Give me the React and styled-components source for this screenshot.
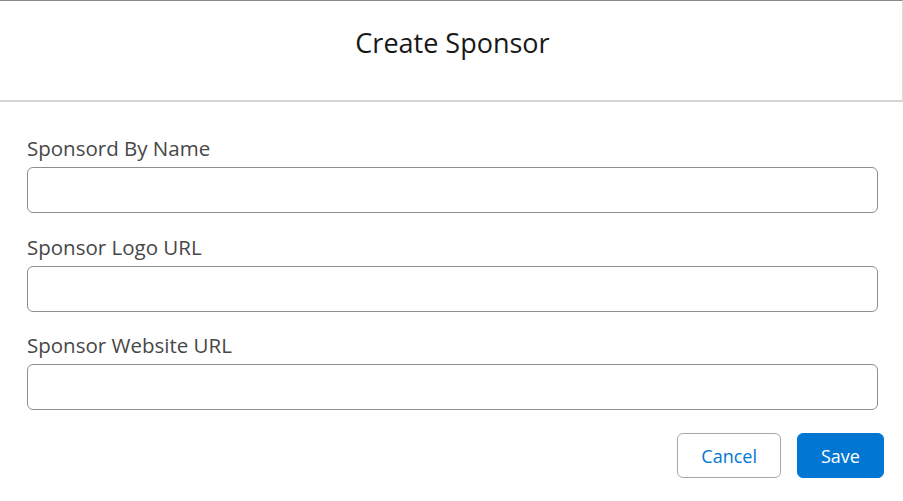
import React from "react";
import styled, { createGlobalStyle } from "styled-components";

const Global = createGlobalStyle`
  html, body { margin: 0; padding: 0; background: #fff; }
  body { font-family: "Open Sans", "Noto Sans", sans-serif; }
  * { box-sizing: border-box; }
`;

const Modal = styled.div`
  width: 903px;
  height: 501px;
  background: #fff;
  display: flex;
  flex-direction: column;
`;

const Header = styled.header`
  height: 102px;
  border-top: 1px solid #8a8a8a;
  border-right: 1px solid #dcdcdc;
  border-bottom: 2px solid #d6d6d6;
  display: flex;
  align-items: flex-start;
  justify-content: center;
  padding-top: 24px;
`;

const Title = styled.h2`
  margin: 0;
  font-size: 27px;
  font-weight: 400;
  line-height: 36px;
  color: #181818;
  padding-left: 3px;
`;

const Body = styled.div`
  padding: 33px 25px 0 27px;
  display: flex;
  flex-direction: column;
  gap: 20.5px;
`;

const Field = styled.div`
  display: flex;
  flex-direction: column;
  gap: 6px;
`;

const Label = styled.label`
  font-size: 20.5px;
  line-height: 26px;
  color: #474747;
`;

const Input = styled.input`
  height: 46px;
  width: 100%;
  border: 1px solid #8f8f8f;
  border-radius: 6px;
  background: #fff;
  font: inherit;
  padding: 0 12px;
  outline: none;
`;

const Footer = styled.div`
  display: flex;
  justify-content: flex-end;
  gap: 16px;
  padding: 23px 19px 0 0;
`;

const Button = styled.button`
  height: 45px;
  padding: 0 23px;
  min-width: ${(p) => (p.$primary ? "87px" : "103px")};
  border-radius: 6px;
  font-family: inherit;
  font-size: 18px;
  cursor: pointer;
  border: 1px solid ${(p) => (p.$primary ? "#0176d3" : "#a8a8a8")};
  background: ${(p) => (p.$primary ? "#0176d3" : "#fff")};
  color: ${(p) => (p.$primary ? "#fff" : "#0176d3")};
`;

export default function App() {
  return (
    <>
      <Global />
      <Modal>
        <Header>
          <Title>Create Sponsor</Title>
        </Header>
        <Body>
          <Field>
            <Label>Sponsord By Name</Label>
            <Input />
          </Field>
          <Field>
            <Label>Sponsor Logo URL</Label>
            <Input />
          </Field>
          <Field>
            <Label>Sponsor Website URL</Label>
            <Input />
          </Field>
        </Body>
        <Footer>
          <Button>Cancel</Button>
          <Button $primary>Save</Button>
        </Footer>
      </Modal>
    </>
  );
}
